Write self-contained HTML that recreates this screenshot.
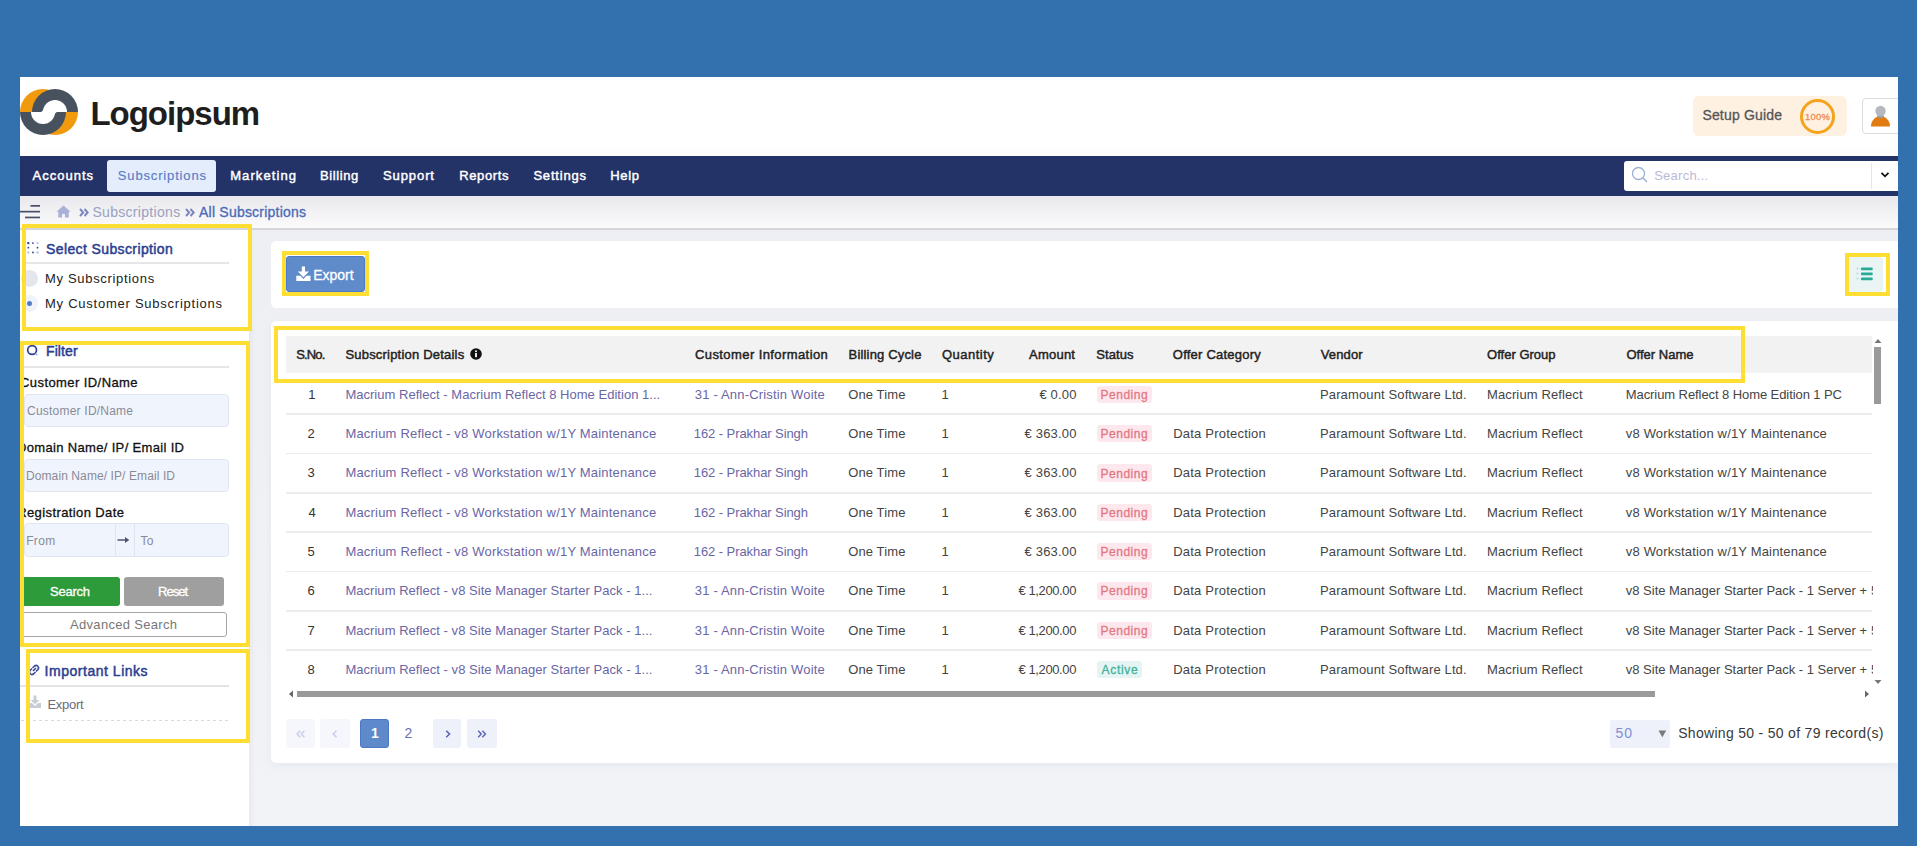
<!DOCTYPE html>
<html><head><meta charset="utf-8"><style>
html,body{margin:0;padding:0;}
body{width:1917px;height:846px;position:relative;overflow:hidden;background:#3270ae;font-family:"Liberation Sans", sans-serif;}
span{font-family:"Liberation Sans", sans-serif;}
</style></head><body>
<div style="position:absolute;left:20px;top:77px;width:1878px;height:749px;background:#fff"></div>
<div style="position:absolute;left:20px;top:147px;width:1878px;height:8px;background:linear-gradient(#fff,#fbfbfb)"></div>
<div style="position:absolute;left:20px;top:155.6px;width:1878px;height:40px;background:#233267"></div>
<div style="position:absolute;left:107px;top:160.3px;width:109px;height:31.5px;background:#e3edfb;border-radius:3px"></div>
<div style="position:absolute;left:20px;top:195.6px;width:1878px;height:32.4px;background:linear-gradient(#e9e9ed,#fbfbfc)"></div>
<div style="position:absolute;left:20px;top:228px;width:1878px;height:1.5px;background:#d6d6da"></div>
<div style="position:absolute;left:20px;top:229.5px;width:229px;height:596.5px;background:#fff"></div>
<div style="position:absolute;left:249px;top:229.5px;width:1649px;height:596.5px;background:linear-gradient(#edeff4,#eff1f5 60%,#f1f3f7)"></div>
<div style="position:absolute;left:249px;top:229.5px;width:6px;height:596.5px;background:linear-gradient(90deg,rgba(0,0,0,0.035),rgba(0,0,0,0))"></div>
<div style="position:absolute;left:271px;top:240.5px;width:1627px;height:67.5px;background:#fff;border-radius:5px 0 0 5px"></div>
<div style="position:absolute;left:271px;top:320.5px;width:1627px;height:442.5px;background:#fff;border-radius:5px 0 0 5px;box-shadow:0 3px 8px rgba(40,50,80,0.05)"></div>
<div style="position:absolute;left:1693px;top:96px;width:154px;height:40px;background:#fef1e2;border-radius:6px"></div>
<div style="position:absolute;left:1800px;top:99px;width:29px;height:29px;border:3px solid #f5a31a;border-radius:50%"></div>
<div style="position:absolute;left:1862px;top:98px;width:40px;height:36px;background:#fff;border:1px solid #dcdcdc;border-radius:4px;box-sizing:border-box"></div>
<svg style="position:absolute;left:1870px;top:104px" width="22" height="24" viewBox="0 0 22 24"><path d="M1 22.6 C1 17.5 4 12.5 10.5 12.5 C17 12.5 20 17.5 20 22.6 Z" fill="#e07c12"/><circle cx="10.5" cy="7" r="5.2" fill="#b5b9be"/><path d="M7 11.2 Q10.5 13.2 14 11.2 L14 13 Q10.5 14.8 7 13 Z" fill="#9aa0a6"/></svg>
<div style="position:absolute;left:1624px;top:161px;width:274px;height:30px;background:#fff;border-radius:3px 0 0 3px"></div>
<div style="position:absolute;left:1871px;top:163px;width:1px;height:26px;background:#e5e5e5"></div>
<svg style="position:absolute;left:1631px;top:166px" width="18" height="17" viewBox="0 0 18 17"><circle cx="7.5" cy="7.5" r="6" fill="none" stroke="#9db0d2" stroke-width="1.3"/><line x1="11.8" y1="11.8" x2="16" y2="16" stroke="#9db0d2" stroke-width="1.5"/></svg>
<svg style="position:absolute;left:1880px;top:171px" width="10" height="8" viewBox="0 0 10 8"><path d="M1.5 1.8 L5 5.3 L8.5 1.8" fill="none" stroke="#111" stroke-width="1.8"/></svg>
<svg style="position:absolute;left:20px;top:204px" width="21" height="15" viewBox="0 0 21 15"><rect x="10.5" y="1" width="9.5" height="1.7" fill="#4b5069"/><rect x="0" y="6.8" width="20" height="1.7" fill="#4b5069"/><rect x="5" y="12.6" width="15" height="1.7" fill="#4b5069"/></svg>
<svg style="position:absolute;left:56px;top:205px" width="15" height="13" viewBox="0 0 15 13"><path d="M7.5 0.5 L0.5 6.8 L2.3 6.8 L2.3 12.5 L6 12.5 L6 9 L9 9 L9 12.5 L12.7 12.5 L12.7 6.8 L14.5 6.8 Z" fill="#a8b1d8"/></svg>
<svg style="position:absolute;left:79px;top:208px" width="10" height="9" viewBox="0 0 10 9"><path d="M1 1 L4.2 4.5 L1 8 M5.5 1 L8.7 4.5 L5.5 8" fill="none" stroke="#7b84bd" stroke-width="1.9"/></svg>
<svg style="position:absolute;left:185px;top:208px" width="10" height="9" viewBox="0 0 10 9"><path d="M1 1 L4.2 4.5 L1 8 M5.5 1 L8.7 4.5 L5.5 8" fill="none" stroke="#7b84bd" stroke-width="1.9"/></svg>
<svg style="position:absolute;left:26px;top:241px" width="14" height="14" viewBox="0 0 14 14"><g fill="#2f3f94"><circle cx="2.3" cy="2.1" r="1.2"/><circle cx="6.9" cy="2.1" r="0.9"/><circle cx="2.3" cy="6.7" r="0.9"/><circle cx="11.5" cy="6.7" r="0.9"/><circle cx="6.9" cy="11.4" r="0.9"/></g><g fill="#b9c3e6"><circle cx="11.5" cy="2.1" r="1.2"/><circle cx="2.3" cy="11.4" r="1.2"/><circle cx="11.5" cy="11.4" r="1.2"/></g></svg>
<div style="position:absolute;left:24px;top:262.2px;width:205px;height:1.5px;background:#e6e6e8"></div>
<div style="position:absolute;left:20.7px;top:270px;width:17px;height:17px;background:#e3e6ec;border-radius:50%"></div>
<div style="position:absolute;left:20.7px;top:295.1px;width:17px;height:17px;background:#f0f3fa;border-radius:50%"></div>
<div style="position:absolute;left:26.6px;top:301px;width:5.2px;height:5.2px;background:#4f7cc6;border-radius:50%"></div>
<svg style="position:absolute;left:26px;top:344px" width="13" height="13" viewBox="0 0 13 13"><circle cx="6.1" cy="6" r="4.4" fill="none" stroke="#2f3f94" stroke-width="1.7"/><line x1="9.4" y1="9.4" x2="11.2" y2="11.2" stroke="#8a96c8" stroke-width="1.2"/></svg>
<div style="position:absolute;left:24px;top:366.2px;width:205px;height:1.5px;background:#e6e6e8"></div>
<div style="position:absolute;left:24px;top:393.5px;width:205px;height:33px;background:#f0f5fd;border:1px solid #e1e7f2;border-radius:4px;box-sizing:border-box"></div>
<div style="position:absolute;left:24px;top:459px;width:205px;height:33px;background:#f0f5fd;border:1px solid #e1e7f2;border-radius:4px;box-sizing:border-box"></div>
<div style="position:absolute;left:23.8px;top:523.3px;width:205px;height:34px;background:#f0f5fd;border:1px solid #e1e7f2;border-radius:4px;box-sizing:border-box"></div>
<div style="position:absolute;left:114.5px;top:524px;width:1px;height:33px;background:#dfe5f0"></div>
<div style="position:absolute;left:134px;top:524px;width:1px;height:33px;background:#dfe5f0"></div>
<svg style="position:absolute;left:117px;top:535px" width="14" height="10" viewBox="0 0 14 10"><path d="M0.5 5 H9" stroke="#50566e" stroke-width="1.5"/><path d="M8 2 L12.3 5 L8 8 Z" fill="#50566e"/></svg>
<div style="position:absolute;left:20.8px;top:577.4px;width:99.2px;height:29px;background:#2e9b3b;border-radius:3px"></div>
<div style="position:absolute;left:124px;top:577.4px;width:100px;height:29px;background:#9f9f9f;border-radius:3px"></div>
<div style="position:absolute;left:20px;top:612px;width:206.5px;height:25px;background:#fff;border:1px solid #a5a5a5;border-radius:3px;box-sizing:border-box"></div>
<svg style="position:absolute;left:27px;top:663px" width="14" height="14" viewBox="0 0 14 14"><g fill="none" stroke="#3a4a9a" stroke-width="1.6"><path d="M6 8 L9 5"/><path d="M5 5.5 L3 7.5 A2.5 2.5 0 0 0 6.5 11 L8.5 9"/><path d="M5.5 5 L7.5 3 A2.5 2.5 0 0 1 11 6.5 L9 8.5"/></g></svg>
<div style="position:absolute;left:20px;top:685px;width:209px;height:1.5px;background:#e4e4e6"></div>
<svg style="position:absolute;left:29px;top:695px" width="12" height="13" viewBox="0 0 12 13"><path d="M4.5 0.5 H7.5 V5 H10.5 L6 9.2 L1.5 5 H4.5 Z" fill="#c9cdd6"/><path d="M0 8 H3 L6 11 L9 8 H12 V13 H0 Z" fill="#c9cdd6"/></svg>
<div style="position:absolute;left:20.8px;top:720px;width:208px;height:1px;background:repeating-linear-gradient(90deg,#d9d9d9 0 3px,transparent 3px 6px)"></div>
<div style="position:absolute;left:286.3px;top:255.5px;width:78.4px;height:36.1px;background:#5f8bcb;border:1px solid #4b7bc6;box-sizing:border-box;border-radius:3px"></div>
<svg style="position:absolute;left:296px;top:266px" width="15" height="16" viewBox="0 0 15 16"><path d="M5.8 0.5 H9 V5.5 H13 L7.4 11.3 L1.8 5.5 H5.8 Z" fill="#fff"/><path d="M0.3 9.8 H4.3 L7.4 12.9 L10.5 9.8 H14.5 V15 H0.3 Z" fill="#fff"/></svg>
<div style="position:absolute;left:1849px;top:257px;width:34px;height:35px;background:#eaf4f5;border-radius:0 4px 4px 0"></div>
<svg style="position:absolute;left:1856px;top:266px" width="20" height="16" viewBox="0 0 20 16"><g fill="#bfe3dc"><circle cx="1.5" cy="2.6" r="1.2"/><circle cx="1.5" cy="7.6" r="1.2"/><circle cx="1.5" cy="12.6" r="1.2"/></g><g fill="#27ab97"><rect x="4.8" y="1.6" width="12" height="2.6" rx="1.3"/><rect x="4.8" y="6.6" width="12" height="2.6" rx="1.3"/><rect x="4.8" y="11.6" width="12" height="2.6" rx="1.3"/></g></svg>
<div style="position:absolute;left:285.8px;top:335.7px;width:1586.4px;height:37.6px;background:#f2f2f2"></div>
<svg style="position:absolute;left:470px;top:348px" width="12" height="12" viewBox="0 0 12 12"><circle cx="6" cy="6" r="5.8" fill="#111"/><rect x="5.1" y="5" width="1.8" height="4.2" fill="#fff"/><circle cx="6" cy="3.3" r="1" fill="#fff"/></svg>
<div style="position:absolute;left:286px;top:413.4px;width:1586px;height:1.5px;background:#ececf0"></div>
<div style="position:absolute;left:1096.6px;top:385.59999999999997px;width:55.4px;height:17.4px;background:#fde8ee;border-radius:3px"></div>
<div style="position:absolute;left:286px;top:452.72999999999996px;width:1586px;height:1.5px;background:#ececf0"></div>
<div style="position:absolute;left:1096.6px;top:424.92999999999995px;width:55.4px;height:17.4px;background:#fde8ee;border-radius:3px"></div>
<div style="position:absolute;left:286px;top:492.05999999999995px;width:1586px;height:1.5px;background:#ececf0"></div>
<div style="position:absolute;left:1096.6px;top:464.25999999999993px;width:55.4px;height:17.4px;background:#fde8ee;border-radius:3px"></div>
<div style="position:absolute;left:286px;top:531.39px;width:1586px;height:1.5px;background:#ececf0"></div>
<div style="position:absolute;left:1096.6px;top:503.59px;width:55.4px;height:17.4px;background:#fde8ee;border-radius:3px"></div>
<div style="position:absolute;left:286px;top:570.72px;width:1586px;height:1.5px;background:#ececf0"></div>
<div style="position:absolute;left:1096.6px;top:542.9200000000001px;width:55.4px;height:17.4px;background:#fde8ee;border-radius:3px"></div>
<div style="position:absolute;left:286px;top:610.05px;width:1586px;height:1.5px;background:#ececf0"></div>
<div style="position:absolute;left:1096.6px;top:582.25px;width:55.4px;height:17.4px;background:#fde8ee;border-radius:3px"></div>
<div style="position:absolute;left:286px;top:649.38px;width:1586px;height:1.5px;background:#ececf0"></div>
<div style="position:absolute;left:1096.6px;top:621.58px;width:55.4px;height:17.4px;background:#fde8ee;border-radius:3px"></div>
<div style="position:absolute;left:1096.6px;top:660.9100000000001px;width:45.6px;height:17.4px;background:#e6f5f3;border-radius:3px"></div>
<div style="position:absolute;left:296.9px;top:690.5px;width:1358.4px;height:6.8px;background:#9a9a9a"></div>
<svg style="position:absolute;left:288px;top:690px" width="6" height="8" viewBox="0 0 6 8"><path d="M5 0.5 L1 4 L5 7.5 Z" fill="#666"/></svg>
<svg style="position:absolute;left:1864px;top:690px" width="6" height="8" viewBox="0 0 6 8"><path d="M1 0.5 L5 4 L1 7.5 Z" fill="#666"/></svg>
<div style="position:absolute;left:1874.3px;top:346.7px;width:6.3px;height:57.6px;background:#9a9a9a"></div>
<svg style="position:absolute;left:1874px;top:338px" width="8" height="6" viewBox="0 0 8 6"><path d="M0.5 5 L4 1 L7.5 5 Z" fill="#777"/></svg>
<svg style="position:absolute;left:1874px;top:679px" width="8" height="6" viewBox="0 0 8 6"><path d="M0.5 1 L4 5 L7.5 1 Z" fill="#777"/></svg>
<div style="position:absolute;left:286px;top:719.1px;width:28.6px;height:28.6px;background:#f6f7fc;border-radius:3px"></div>
<div style="position:absolute;left:319.8px;top:719.1px;width:29.9px;height:28.6px;background:#f6f7fc;border-radius:3px"></div>
<div style="position:absolute;left:360.1px;top:719.1px;width:28.6px;height:28.6px;background:#5e89cb;border:1px solid #4b78c2;box-sizing:border-box;border-radius:3px"></div>
<div style="position:absolute;left:432.9px;top:719.1px;width:28.6px;height:28.6px;background:#eef0fa;border-radius:3px"></div>
<div style="position:absolute;left:466.7px;top:719.1px;width:29.9px;height:28.6px;background:#eef0fa;border-radius:3px"></div>
<svg style="position:absolute;left:296px;top:730px" width="10" height="8" viewBox="0 0 10 8"><path d="M4.2 0.8 L1.2 4 L4.2 7.2 M8.4 0.8 L5.4 4 L8.4 7.2" fill="none" stroke="#c8cde9" stroke-width="1.6"/></svg>
<svg style="position:absolute;left:331px;top:730px" width="8" height="8" viewBox="0 0 8 8"><path d="M5.5 0.8 L2.2 4 L5.5 7.2" fill="none" stroke="#c8cde9" stroke-width="1.6"/></svg>
<svg style="position:absolute;left:443.5px;top:730px" width="8" height="8" viewBox="0 0 8 8"><path d="M2.2 0.8 L5.5 4 L2.2 7.2" fill="none" stroke="#5f66b3" stroke-width="1.6"/></svg>
<svg style="position:absolute;left:477px;top:730px" width="10" height="8" viewBox="0 0 10 8"><path d="M1.2 0.8 L4.2 4 L1.2 7.2 M5.4 0.8 L8.4 4 L5.4 7.2" fill="none" stroke="#5f66b3" stroke-width="1.5"/></svg>
<div style="position:absolute;left:1610.3px;top:719.6px;width:60.2px;height:28.1px;background:#eef0fa;border-radius:3px"></div>
<svg style="position:absolute;left:1657.5px;top:729.5px" width="9" height="8" viewBox="0 0 9 8"><path d="M0.5 0.5 L8.2 0.5 L4.35 7.2 Z" fill="#7a7a7a"/></svg>
<svg style="position:absolute;left:20px;top:88px" width="58" height="48" viewBox="0 0 58 48">
<defs><clipPath id="lgt"><rect x="-1" y="-1" width="60" height="25"/></clipPath><clipPath id="lgb"><rect x="-1" y="24" width="60" height="25"/></clipPath></defs>
<g clip-path="url(#lgt)"><circle cx="23" cy="24" r="23" fill="#f29a0e"/><circle cx="35" cy="24" r="23" fill="#47525e"/><circle cx="35" cy="24" r="12" fill="#fff"/></g>
<g clip-path="url(#lgb)"><circle cx="35" cy="24" r="23" fill="#f29a0e"/><circle cx="23" cy="24" r="23" fill="#47525e"/><circle cx="23" cy="24" r="12" fill="#fff"/></g>
<path d="M18.6 24.2 A4.6 4.6 0 0 0 23.9 19.2 L24.2 24.2 Z" fill="#fff"/>
<path d="M39.4 23.8 A4.6 4.6 0 0 0 34.1 28.8 L33.8 23.8 Z" fill="#fff"/>

</svg>
<span id="t0" style="position:absolute;left:32.60px;top:169.00px;font-size:13px;line-height:13px;font-weight:400;color:#ffffff;letter-spacing:0.988px;white-space:nowrap;;-webkit-text-stroke:0.45px currentColor">Accounts</span>
<span id="t1" style="position:absolute;left:117.80px;top:169.00px;font-size:13px;line-height:13px;font-weight:400;color:#5b7cc9;letter-spacing:0.846px;white-space:nowrap;-webkit-text-stroke:0.15px currentColor">Subscriptions</span>
<span id="t2" style="position:absolute;left:230.20px;top:169.00px;font-size:13px;line-height:13px;font-weight:400;color:#ffffff;letter-spacing:1.090px;white-space:nowrap;;-webkit-text-stroke:0.45px currentColor">Marketing</span>
<span id="t3" style="position:absolute;left:320.00px;top:169.00px;font-size:13px;line-height:13px;font-weight:400;color:#ffffff;letter-spacing:0.585px;white-space:nowrap;;-webkit-text-stroke:0.45px currentColor">Billing</span>
<span id="t4" style="position:absolute;left:383.00px;top:169.00px;font-size:13px;line-height:13px;font-weight:400;color:#ffffff;letter-spacing:0.909px;white-space:nowrap;;-webkit-text-stroke:0.45px currentColor">Support</span>
<span id="t5" style="position:absolute;left:459.20px;top:169.00px;font-size:13px;line-height:13px;font-weight:400;color:#ffffff;letter-spacing:0.645px;white-space:nowrap;;-webkit-text-stroke:0.45px currentColor">Reports</span>
<span id="t6" style="position:absolute;left:533.40px;top:169.00px;font-size:13px;line-height:13px;font-weight:400;color:#ffffff;letter-spacing:0.802px;white-space:nowrap;;-webkit-text-stroke:0.45px currentColor">Settings</span>
<span id="t7" style="position:absolute;left:610.20px;top:169.00px;font-size:13px;line-height:13px;font-weight:400;color:#ffffff;letter-spacing:0.683px;white-space:nowrap;;-webkit-text-stroke:0.45px currentColor">Help</span>
<span id="t8" style="position:absolute;left:90.40px;top:96.87px;font-size:33px;line-height:33px;font-weight:701;color:#1e1e1e;letter-spacing:-1.002px;white-space:nowrap;">Logoipsum</span>
<span id="t9" style="position:absolute;left:1702.40px;top:108.15px;font-size:14px;line-height:14px;font-weight:400;color:#555;letter-spacing:0.176px;white-space:nowrap;-webkit-text-stroke:0.3px currentColor">Setup Guide</span>
<span id="t10" style="position:absolute;left:1805.00px;top:111.96px;font-size:9.5px;line-height:9.5px;font-weight:400;color:#f08d55;letter-spacing:0.229px;white-space:nowrap;;-webkit-text-stroke:0.33px currentColor">100%</span>
<span id="t11" style="position:absolute;left:1654.20px;top:168.60px;font-size:13px;line-height:13px;font-weight:400;color:#b9bbd6;letter-spacing:0.246px;white-space:nowrap;">Search...</span>
<span id="t12" style="position:absolute;left:92.40px;top:205.15px;font-size:14px;line-height:14px;font-weight:400;color:#9aa0bf;letter-spacing:0.313px;white-space:nowrap;">Subscriptions</span>
<span id="t13" style="position:absolute;left:199.00px;top:205.15px;font-size:14px;line-height:14px;font-weight:400;color:#4a69b6;letter-spacing:0.219px;white-space:nowrap;-webkit-text-stroke:0.3px currentColor">All Subscriptions</span>
<span id="t14" style="position:absolute;left:46.00px;top:241.65px;font-size:14px;line-height:14px;font-weight:400;color:#2c3d8f;letter-spacing:0.386px;white-space:nowrap;;-webkit-text-stroke:0.48px currentColor">Select Subscription</span>
<span id="t15" style="position:absolute;left:45.00px;top:272.00px;font-size:13px;line-height:13px;font-weight:400;color:#222;letter-spacing:0.681px;white-space:nowrap;">My Subscriptions</span>
<span id="t16" style="position:absolute;left:45.00px;top:296.50px;font-size:13px;line-height:13px;font-weight:400;color:#222;letter-spacing:0.752px;white-space:nowrap;">My Customer Subscriptions</span>
<span id="t17" style="position:absolute;left:46.00px;top:343.55px;font-size:14px;line-height:14px;font-weight:400;color:#2c3d8f;letter-spacing:0.095px;white-space:nowrap;;-webkit-text-stroke:0.48px currentColor">Filter</span>
<span id="t18" style="position:absolute;left:20.00px;top:376.00px;font-size:13px;line-height:13px;font-weight:400;color:#111;letter-spacing:0.423px;white-space:nowrap;-webkit-text-stroke:0.3px currentColor">Customer ID/Name</span>
<span id="t19" style="position:absolute;left:27.00px;top:404.84px;font-size:12px;line-height:12px;font-weight:400;color:#8a8a96;letter-spacing:0.220px;white-space:nowrap;">Customer ID/Name</span>
<span id="t20" style="position:absolute;left:17.00px;top:441.00px;font-size:13px;line-height:13px;font-weight:400;color:#111;letter-spacing:0.336px;white-space:nowrap;-webkit-text-stroke:0.3px currentColor">Domain Name/ IP/ Email ID</span>
<span id="t21" style="position:absolute;left:26.00px;top:470.34px;font-size:12px;line-height:12px;font-weight:400;color:#8a8a96;letter-spacing:0.095px;white-space:nowrap;">Domain Name/ IP/ Email ID</span>
<span id="t22" style="position:absolute;left:17.20px;top:506.00px;font-size:13px;line-height:13px;font-weight:400;color:#111;letter-spacing:0.397px;white-space:nowrap;-webkit-text-stroke:0.3px currentColor">Registration Date</span>
<span id="t23" style="position:absolute;left:26.20px;top:534.84px;font-size:12px;line-height:12px;font-weight:400;color:#8a8a96;letter-spacing:0.333px;white-space:nowrap;">From</span>
<span id="t24" style="position:absolute;left:140.40px;top:534.84px;font-size:12px;line-height:12px;font-weight:400;color:#8a8a96;letter-spacing:0.312px;white-space:nowrap;">To</span>
<span id="t25" style="position:absolute;left:50.00px;top:585.00px;font-size:13px;line-height:13px;font-weight:400;color:#fff;letter-spacing:-0.241px;white-space:nowrap;-webkit-text-stroke:0.3px currentColor">Search</span>
<span id="t26" style="position:absolute;left:158.00px;top:585.00px;font-size:13px;line-height:13px;font-weight:400;color:#fff;letter-spacing:-0.992px;white-space:nowrap;-webkit-text-stroke:0.3px currentColor">Reset</span>
<span id="t27" style="position:absolute;left:70.00px;top:618.00px;font-size:13px;line-height:13px;font-weight:400;color:#777;letter-spacing:0.312px;white-space:nowrap;">Advanced Search</span>
<span id="t28" style="position:absolute;left:44.60px;top:664.15px;font-size:14px;line-height:14px;font-weight:400;color:#2c3d8f;letter-spacing:0.520px;white-space:nowrap;;-webkit-text-stroke:0.48px currentColor">Important Links</span>
<span id="t29" style="position:absolute;left:47.40px;top:697.50px;font-size:13px;line-height:13px;font-weight:400;color:#6b6b7b;letter-spacing:-0.276px;white-space:nowrap;">Export</span>
<span id="t30" style="position:absolute;left:313.20px;top:268.15px;font-size:14px;line-height:14px;font-weight:400;color:#fff;letter-spacing:-0.014px;white-space:nowrap;-webkit-text-stroke:0.3px currentColor">Export</span>
<span id="t31" style="position:absolute;left:296.20px;top:347.60px;font-size:13px;line-height:13px;font-weight:400;color:#222;letter-spacing:-0.829px;white-space:nowrap;;-webkit-text-stroke:0.45px currentColor">S.No.</span>
<span id="t32" style="position:absolute;left:345.40px;top:347.60px;font-size:13px;line-height:13px;font-weight:400;color:#222;letter-spacing:0.206px;white-space:nowrap;;-webkit-text-stroke:0.45px currentColor">Subscription Details</span>
<span id="t33" style="position:absolute;left:695.00px;top:347.60px;font-size:13px;line-height:13px;font-weight:400;color:#222;letter-spacing:0.411px;white-space:nowrap;;-webkit-text-stroke:0.45px currentColor">Customer Information</span>
<span id="t34" style="position:absolute;left:848.60px;top:347.60px;font-size:13px;line-height:13px;font-weight:400;color:#222;letter-spacing:0.166px;white-space:nowrap;;-webkit-text-stroke:0.45px currentColor">Billing Cycle</span>
<span id="t35" style="position:absolute;left:942.00px;top:347.60px;font-size:13px;line-height:13px;font-weight:400;color:#222;letter-spacing:0.483px;white-space:nowrap;;-webkit-text-stroke:0.45px currentColor">Quantity</span>
<span id="t36" style="position:absolute;left:1029.00px;top:347.60px;font-size:13px;line-height:13px;font-weight:400;color:#222;letter-spacing:0.237px;white-space:nowrap;;-webkit-text-stroke:0.45px currentColor">Amount</span>
<span id="t37" style="position:absolute;left:1096.20px;top:347.60px;font-size:13px;line-height:13px;font-weight:400;color:#222;letter-spacing:0.108px;white-space:nowrap;;-webkit-text-stroke:0.45px currentColor">Status</span>
<span id="t38" style="position:absolute;left:1172.80px;top:347.60px;font-size:13px;line-height:13px;font-weight:400;color:#222;letter-spacing:0.228px;white-space:nowrap;;-webkit-text-stroke:0.45px currentColor">Offer Category</span>
<span id="t39" style="position:absolute;left:1320.80px;top:347.60px;font-size:13px;line-height:13px;font-weight:400;color:#222;letter-spacing:0.119px;white-space:nowrap;;-webkit-text-stroke:0.45px currentColor">Vendor</span>
<span id="t40" style="position:absolute;left:1487.00px;top:347.60px;font-size:13px;line-height:13px;font-weight:400;color:#222;letter-spacing:0.019px;white-space:nowrap;;-webkit-text-stroke:0.45px currentColor">Offer Group</span>
<span id="t41" style="position:absolute;left:1626.40px;top:347.60px;font-size:13px;line-height:13px;font-weight:400;color:#222;letter-spacing:0.027px;white-space:nowrap;;-webkit-text-stroke:0.45px currentColor">Offer Name</span>
<span id="t42" style="position:absolute;left:308.20px;top:387.70px;font-size:13px;line-height:13px;font-weight:400;color:#333;letter-spacing:0.000px;white-space:nowrap;">1</span>
<span id="t43" style="position:absolute;left:345.40px;top:387.70px;font-size:13px;line-height:13px;font-weight:400;color:#6a66a6;letter-spacing:0.024px;white-space:nowrap;">Macrium Reflect - Macrium Reflect 8 Home Edition 1...</span>
<span id="t44" style="position:absolute;left:694.80px;top:387.70px;font-size:13px;line-height:13px;font-weight:400;color:#6a66a6;letter-spacing:0.181px;white-space:nowrap;">31 - Ann-Cristin Woite</span>
<span id="t45" style="position:absolute;left:848.20px;top:387.70px;font-size:13px;line-height:13px;font-weight:400;color:#444;letter-spacing:0.120px;white-space:nowrap;">One Time</span>
<span id="t46" style="position:absolute;left:941.60px;top:387.70px;font-size:13px;line-height:13px;font-weight:400;color:#444;letter-spacing:0.000px;white-space:nowrap;">1</span>
<span id="t47" style="position:absolute;left:1039.40px;top:387.70px;font-size:13px;line-height:13px;font-weight:400;color:#444;letter-spacing:0.169px;white-space:nowrap;">€ 0.00</span>
<span id="t48" style="position:absolute;left:1100.60px;top:388.84px;font-size:12px;line-height:12px;font-weight:400;color:#e47786;letter-spacing:0.492px;white-space:nowrap;-webkit-text-stroke:0.3px currentColor">Pending</span>
<span id="t49" style="position:absolute;left:1320.00px;top:387.70px;font-size:13px;line-height:13px;font-weight:400;color:#444;letter-spacing:0.127px;white-space:nowrap;">Paramount Software Ltd.</span>
<span id="t50" style="position:absolute;left:1487.00px;top:387.70px;font-size:13px;line-height:13px;font-weight:400;color:#444;letter-spacing:0.120px;white-space:nowrap;">Macrium Reflect</span>
<span id="t51" style="position:absolute;left:1625.80px;top:387.70px;font-size:13px;line-height:13px;font-weight:400;color:#444;letter-spacing:-0.080px;white-space:nowrap;">Macrium Reflect 8 Home Edition 1 PC</span>
<span id="t52" style="position:absolute;left:307.40px;top:427.03px;font-size:13px;line-height:13px;font-weight:400;color:#333;letter-spacing:0.000px;white-space:nowrap;">2</span>
<span id="t53" style="position:absolute;left:345.40px;top:427.03px;font-size:13px;line-height:13px;font-weight:400;color:#6a66a6;letter-spacing:0.193px;white-space:nowrap;">Macrium Reflect - v8 Workstation w/1Y Maintenance</span>
<span id="t54" style="position:absolute;left:693.80px;top:427.03px;font-size:13px;line-height:13px;font-weight:400;color:#6a66a6;letter-spacing:-0.079px;white-space:nowrap;">162 - Prakhar Singh</span>
<span id="t55" style="position:absolute;left:848.20px;top:427.03px;font-size:13px;line-height:13px;font-weight:400;color:#444;letter-spacing:0.120px;white-space:nowrap;">One Time</span>
<span id="t56" style="position:absolute;left:941.60px;top:427.03px;font-size:13px;line-height:13px;font-weight:400;color:#444;letter-spacing:0.000px;white-space:nowrap;">1</span>
<span id="t57" style="position:absolute;left:1024.60px;top:427.03px;font-size:13px;line-height:13px;font-weight:400;color:#444;letter-spacing:0.170px;white-space:nowrap;">€ 363.00</span>
<span id="t58" style="position:absolute;left:1100.60px;top:428.17px;font-size:12px;line-height:12px;font-weight:400;color:#e47786;letter-spacing:0.492px;white-space:nowrap;-webkit-text-stroke:0.3px currentColor">Pending</span>
<span id="t59" style="position:absolute;left:1173.20px;top:427.03px;font-size:13px;line-height:13px;font-weight:400;color:#444;letter-spacing:0.214px;white-space:nowrap;">Data Protection</span>
<span id="t60" style="position:absolute;left:1320.00px;top:427.03px;font-size:13px;line-height:13px;font-weight:400;color:#444;letter-spacing:0.127px;white-space:nowrap;">Paramount Software Ltd.</span>
<span id="t61" style="position:absolute;left:1487.00px;top:427.03px;font-size:13px;line-height:13px;font-weight:400;color:#444;letter-spacing:0.120px;white-space:nowrap;">Macrium Reflect</span>
<span id="t62" style="position:absolute;left:1625.80px;top:427.03px;font-size:13px;line-height:13px;font-weight:400;color:#444;letter-spacing:0.164px;white-space:nowrap;">v8 Workstation w/1Y Maintenance</span>
<span id="t63" style="position:absolute;left:307.40px;top:466.36px;font-size:13px;line-height:13px;font-weight:400;color:#333;letter-spacing:0.000px;white-space:nowrap;">3</span>
<span id="t64" style="position:absolute;left:345.40px;top:466.36px;font-size:13px;line-height:13px;font-weight:400;color:#6a66a6;letter-spacing:0.193px;white-space:nowrap;">Macrium Reflect - v8 Workstation w/1Y Maintenance</span>
<span id="t65" style="position:absolute;left:693.80px;top:466.36px;font-size:13px;line-height:13px;font-weight:400;color:#6a66a6;letter-spacing:-0.079px;white-space:nowrap;">162 - Prakhar Singh</span>
<span id="t66" style="position:absolute;left:848.20px;top:466.36px;font-size:13px;line-height:13px;font-weight:400;color:#444;letter-spacing:0.120px;white-space:nowrap;">One Time</span>
<span id="t67" style="position:absolute;left:941.60px;top:466.36px;font-size:13px;line-height:13px;font-weight:400;color:#444;letter-spacing:0.000px;white-space:nowrap;">1</span>
<span id="t68" style="position:absolute;left:1024.60px;top:466.36px;font-size:13px;line-height:13px;font-weight:400;color:#444;letter-spacing:0.170px;white-space:nowrap;">€ 363.00</span>
<span id="t69" style="position:absolute;left:1100.60px;top:467.50px;font-size:12px;line-height:12px;font-weight:400;color:#e47786;letter-spacing:0.492px;white-space:nowrap;-webkit-text-stroke:0.3px currentColor">Pending</span>
<span id="t70" style="position:absolute;left:1173.20px;top:466.36px;font-size:13px;line-height:13px;font-weight:400;color:#444;letter-spacing:0.214px;white-space:nowrap;">Data Protection</span>
<span id="t71" style="position:absolute;left:1320.00px;top:466.36px;font-size:13px;line-height:13px;font-weight:400;color:#444;letter-spacing:0.127px;white-space:nowrap;">Paramount Software Ltd.</span>
<span id="t72" style="position:absolute;left:1487.00px;top:466.36px;font-size:13px;line-height:13px;font-weight:400;color:#444;letter-spacing:0.120px;white-space:nowrap;">Macrium Reflect</span>
<span id="t73" style="position:absolute;left:1625.80px;top:466.36px;font-size:13px;line-height:13px;font-weight:400;color:#444;letter-spacing:0.164px;white-space:nowrap;">v8 Workstation w/1Y Maintenance</span>
<span id="t74" style="position:absolute;left:308.40px;top:505.69px;font-size:13px;line-height:13px;font-weight:400;color:#333;letter-spacing:0.000px;white-space:nowrap;">4</span>
<span id="t75" style="position:absolute;left:345.40px;top:505.69px;font-size:13px;line-height:13px;font-weight:400;color:#6a66a6;letter-spacing:0.193px;white-space:nowrap;">Macrium Reflect - v8 Workstation w/1Y Maintenance</span>
<span id="t76" style="position:absolute;left:693.80px;top:505.69px;font-size:13px;line-height:13px;font-weight:400;color:#6a66a6;letter-spacing:-0.079px;white-space:nowrap;">162 - Prakhar Singh</span>
<span id="t77" style="position:absolute;left:848.20px;top:505.69px;font-size:13px;line-height:13px;font-weight:400;color:#444;letter-spacing:0.120px;white-space:nowrap;">One Time</span>
<span id="t78" style="position:absolute;left:941.60px;top:505.69px;font-size:13px;line-height:13px;font-weight:400;color:#444;letter-spacing:0.000px;white-space:nowrap;">1</span>
<span id="t79" style="position:absolute;left:1024.60px;top:505.69px;font-size:13px;line-height:13px;font-weight:400;color:#444;letter-spacing:0.170px;white-space:nowrap;">€ 363.00</span>
<span id="t80" style="position:absolute;left:1100.60px;top:506.83px;font-size:12px;line-height:12px;font-weight:400;color:#e47786;letter-spacing:0.492px;white-space:nowrap;-webkit-text-stroke:0.3px currentColor">Pending</span>
<span id="t81" style="position:absolute;left:1173.20px;top:505.69px;font-size:13px;line-height:13px;font-weight:400;color:#444;letter-spacing:0.214px;white-space:nowrap;">Data Protection</span>
<span id="t82" style="position:absolute;left:1320.00px;top:505.69px;font-size:13px;line-height:13px;font-weight:400;color:#444;letter-spacing:0.127px;white-space:nowrap;">Paramount Software Ltd.</span>
<span id="t83" style="position:absolute;left:1487.00px;top:505.69px;font-size:13px;line-height:13px;font-weight:400;color:#444;letter-spacing:0.120px;white-space:nowrap;">Macrium Reflect</span>
<span id="t84" style="position:absolute;left:1625.80px;top:505.69px;font-size:13px;line-height:13px;font-weight:400;color:#444;letter-spacing:0.164px;white-space:nowrap;">v8 Workstation w/1Y Maintenance</span>
<span id="t85" style="position:absolute;left:307.40px;top:545.02px;font-size:13px;line-height:13px;font-weight:400;color:#333;letter-spacing:0.000px;white-space:nowrap;">5</span>
<span id="t86" style="position:absolute;left:345.40px;top:545.02px;font-size:13px;line-height:13px;font-weight:400;color:#6a66a6;letter-spacing:0.193px;white-space:nowrap;">Macrium Reflect - v8 Workstation w/1Y Maintenance</span>
<span id="t87" style="position:absolute;left:693.80px;top:545.02px;font-size:13px;line-height:13px;font-weight:400;color:#6a66a6;letter-spacing:-0.079px;white-space:nowrap;">162 - Prakhar Singh</span>
<span id="t88" style="position:absolute;left:848.20px;top:545.02px;font-size:13px;line-height:13px;font-weight:400;color:#444;letter-spacing:0.120px;white-space:nowrap;">One Time</span>
<span id="t89" style="position:absolute;left:941.60px;top:545.02px;font-size:13px;line-height:13px;font-weight:400;color:#444;letter-spacing:0.000px;white-space:nowrap;">1</span>
<span id="t90" style="position:absolute;left:1024.60px;top:545.02px;font-size:13px;line-height:13px;font-weight:400;color:#444;letter-spacing:0.170px;white-space:nowrap;">€ 363.00</span>
<span id="t91" style="position:absolute;left:1100.60px;top:546.16px;font-size:12px;line-height:12px;font-weight:400;color:#e47786;letter-spacing:0.492px;white-space:nowrap;-webkit-text-stroke:0.3px currentColor">Pending</span>
<span id="t92" style="position:absolute;left:1173.20px;top:545.02px;font-size:13px;line-height:13px;font-weight:400;color:#444;letter-spacing:0.214px;white-space:nowrap;">Data Protection</span>
<span id="t93" style="position:absolute;left:1320.00px;top:545.02px;font-size:13px;line-height:13px;font-weight:400;color:#444;letter-spacing:0.127px;white-space:nowrap;">Paramount Software Ltd.</span>
<span id="t94" style="position:absolute;left:1487.00px;top:545.02px;font-size:13px;line-height:13px;font-weight:400;color:#444;letter-spacing:0.120px;white-space:nowrap;">Macrium Reflect</span>
<span id="t95" style="position:absolute;left:1625.80px;top:545.02px;font-size:13px;line-height:13px;font-weight:400;color:#444;letter-spacing:0.164px;white-space:nowrap;">v8 Workstation w/1Y Maintenance</span>
<span id="t96" style="position:absolute;left:307.40px;top:584.35px;font-size:13px;line-height:13px;font-weight:400;color:#333;letter-spacing:0.000px;white-space:nowrap;">6</span>
<span id="t97" style="position:absolute;left:345.40px;top:584.35px;font-size:13px;line-height:13px;font-weight:400;color:#6a66a6;letter-spacing:0.041px;white-space:nowrap;">Macrium Reflect - v8 Site Manager Starter Pack - 1...</span>
<span id="t98" style="position:absolute;left:694.80px;top:584.35px;font-size:13px;line-height:13px;font-weight:400;color:#6a66a6;letter-spacing:0.181px;white-space:nowrap;">31 - Ann-Cristin Woite</span>
<span id="t99" style="position:absolute;left:848.20px;top:584.35px;font-size:13px;line-height:13px;font-weight:400;color:#444;letter-spacing:0.120px;white-space:nowrap;">One Time</span>
<span id="t100" style="position:absolute;left:941.60px;top:584.35px;font-size:13px;line-height:13px;font-weight:400;color:#444;letter-spacing:0.000px;white-space:nowrap;">1</span>
<span id="t101" style="position:absolute;left:1018.40px;top:584.35px;font-size:13px;line-height:13px;font-weight:400;color:#444;letter-spacing:-0.384px;white-space:nowrap;">€ 1,200.00</span>
<span id="t102" style="position:absolute;left:1100.60px;top:585.49px;font-size:12px;line-height:12px;font-weight:400;color:#e47786;letter-spacing:0.492px;white-space:nowrap;-webkit-text-stroke:0.3px currentColor">Pending</span>
<span id="t103" style="position:absolute;left:1173.20px;top:584.35px;font-size:13px;line-height:13px;font-weight:400;color:#444;letter-spacing:0.214px;white-space:nowrap;">Data Protection</span>
<span id="t104" style="position:absolute;left:1320.00px;top:584.35px;font-size:13px;line-height:13px;font-weight:400;color:#444;letter-spacing:0.127px;white-space:nowrap;">Paramount Software Ltd.</span>
<span id="t105" style="position:absolute;left:1487.00px;top:584.35px;font-size:13px;line-height:13px;font-weight:400;color:#444;letter-spacing:0.120px;white-space:nowrap;">Macrium Reflect</span>
<span id="t106" style="position:absolute;left:1625.80px;top:584.35px;font-size:13px;line-height:13px;font-weight:400;color:#444;letter-spacing:-0.012px;white-space:nowrap;">v8 Site Manager Starter Pack - 1 Server +</span>
<span id="t107" style="position:absolute;left:307.40px;top:623.68px;font-size:13px;line-height:13px;font-weight:400;color:#333;letter-spacing:0.000px;white-space:nowrap;">7</span>
<span id="t108" style="position:absolute;left:345.40px;top:623.68px;font-size:13px;line-height:13px;font-weight:400;color:#6a66a6;letter-spacing:0.041px;white-space:nowrap;">Macrium Reflect - v8 Site Manager Starter Pack - 1...</span>
<span id="t109" style="position:absolute;left:694.80px;top:623.68px;font-size:13px;line-height:13px;font-weight:400;color:#6a66a6;letter-spacing:0.181px;white-space:nowrap;">31 - Ann-Cristin Woite</span>
<span id="t110" style="position:absolute;left:848.20px;top:623.68px;font-size:13px;line-height:13px;font-weight:400;color:#444;letter-spacing:0.120px;white-space:nowrap;">One Time</span>
<span id="t111" style="position:absolute;left:941.60px;top:623.68px;font-size:13px;line-height:13px;font-weight:400;color:#444;letter-spacing:0.000px;white-space:nowrap;">1</span>
<span id="t112" style="position:absolute;left:1018.40px;top:623.68px;font-size:13px;line-height:13px;font-weight:400;color:#444;letter-spacing:-0.384px;white-space:nowrap;">€ 1,200.00</span>
<span id="t113" style="position:absolute;left:1100.60px;top:624.82px;font-size:12px;line-height:12px;font-weight:400;color:#e47786;letter-spacing:0.492px;white-space:nowrap;-webkit-text-stroke:0.3px currentColor">Pending</span>
<span id="t114" style="position:absolute;left:1173.20px;top:623.68px;font-size:13px;line-height:13px;font-weight:400;color:#444;letter-spacing:0.214px;white-space:nowrap;">Data Protection</span>
<span id="t115" style="position:absolute;left:1320.00px;top:623.68px;font-size:13px;line-height:13px;font-weight:400;color:#444;letter-spacing:0.127px;white-space:nowrap;">Paramount Software Ltd.</span>
<span id="t116" style="position:absolute;left:1487.00px;top:623.68px;font-size:13px;line-height:13px;font-weight:400;color:#444;letter-spacing:0.120px;white-space:nowrap;">Macrium Reflect</span>
<span id="t117" style="position:absolute;left:1625.80px;top:623.68px;font-size:13px;line-height:13px;font-weight:400;color:#444;letter-spacing:-0.012px;white-space:nowrap;">v8 Site Manager Starter Pack - 1 Server +</span>
<span id="t118" style="position:absolute;left:307.40px;top:663.01px;font-size:13px;line-height:13px;font-weight:400;color:#333;letter-spacing:0.000px;white-space:nowrap;">8</span>
<span id="t119" style="position:absolute;left:345.40px;top:663.01px;font-size:13px;line-height:13px;font-weight:400;color:#6a66a6;letter-spacing:0.041px;white-space:nowrap;">Macrium Reflect - v8 Site Manager Starter Pack - 1...</span>
<span id="t120" style="position:absolute;left:694.80px;top:663.01px;font-size:13px;line-height:13px;font-weight:400;color:#6a66a6;letter-spacing:0.181px;white-space:nowrap;">31 - Ann-Cristin Woite</span>
<span id="t121" style="position:absolute;left:848.20px;top:663.01px;font-size:13px;line-height:13px;font-weight:400;color:#444;letter-spacing:0.120px;white-space:nowrap;">One Time</span>
<span id="t122" style="position:absolute;left:941.60px;top:663.01px;font-size:13px;line-height:13px;font-weight:400;color:#444;letter-spacing:0.000px;white-space:nowrap;">1</span>
<span id="t123" style="position:absolute;left:1018.40px;top:663.01px;font-size:13px;line-height:13px;font-weight:400;color:#444;letter-spacing:-0.384px;white-space:nowrap;">€ 1,200.00</span>
<span id="t124" style="position:absolute;left:1101.60px;top:664.15px;font-size:12px;line-height:12px;font-weight:400;color:#3eb29a;letter-spacing:0.662px;white-space:nowrap;-webkit-text-stroke:0.3px currentColor">Active</span>
<span id="t125" style="position:absolute;left:1173.20px;top:663.01px;font-size:13px;line-height:13px;font-weight:400;color:#444;letter-spacing:0.214px;white-space:nowrap;">Data Protection</span>
<span id="t126" style="position:absolute;left:1320.00px;top:663.01px;font-size:13px;line-height:13px;font-weight:400;color:#444;letter-spacing:0.127px;white-space:nowrap;">Paramount Software Ltd.</span>
<span id="t127" style="position:absolute;left:1487.00px;top:663.01px;font-size:13px;line-height:13px;font-weight:400;color:#444;letter-spacing:0.120px;white-space:nowrap;">Macrium Reflect</span>
<span id="t128" style="position:absolute;left:1625.80px;top:663.01px;font-size:13px;line-height:13px;font-weight:400;color:#444;letter-spacing:-0.012px;white-space:nowrap;">v8 Site Manager Starter Pack - 1 Server +</span>
<span id="t129" style="position:absolute;left:371.00px;top:726.15px;font-size:14px;line-height:14px;font-weight:400;color:#fff;letter-spacing:0.000px;white-space:nowrap;font-weight:700">1</span>
<span id="t130" style="position:absolute;left:404.40px;top:726.35px;font-size:14px;line-height:14px;font-weight:400;color:#6a70b5;letter-spacing:0.000px;white-space:nowrap;">2</span>
<span id="t131" style="position:absolute;left:1615.60px;top:726.35px;font-size:14px;line-height:14px;font-weight:400;color:#7d90d4;letter-spacing:0.822px;white-space:nowrap;">50</span>
<span id="t132" style="position:absolute;left:1678.20px;top:726.15px;font-size:14px;line-height:14px;font-weight:400;color:#383838;letter-spacing:0.303px;white-space:nowrap;">Showing 50 - 50 of 79 record(s)</span>
<div class="ov" style="position:absolute;left:0;top:0;width:20px;height:846px;background:#3270ae"></div>
<div class="ov" style="position:absolute;left:1898px;top:0;width:19px;height:846px;background:#3270ae"></div>
<div class="ov" style="position:absolute;left:22px;top:224px;width:230px;height:107px;border:4px solid #ffde34;box-sizing:border-box"></div>
<div class="ov" style="position:absolute;left:20px;top:341px;width:230px;height:306px;border:4px solid #ffde34;box-sizing:border-box"></div>
<div class="ov" style="position:absolute;left:26px;top:649px;width:224px;height:94px;border:4px solid #ffde34;box-sizing:border-box"></div>
<div class="ov" style="position:absolute;left:282px;top:251.3px;width:87px;height:44.69999999999999px;border:4px solid #ffde34;box-sizing:border-box"></div>
<div class="ov" style="position:absolute;left:1845px;top:253.2px;width:45px;height:42.80000000000001px;border:4px solid #ffde34;box-sizing:border-box"></div>
<div class="ov" style="position:absolute;left:274px;top:326.3px;width:1471px;height:56.89999999999998px;border:4px solid #ffde34;box-sizing:border-box"></div>
<div style="position:absolute;left:1871px;top:584.3px;width:1.8px;height:13px;overflow:hidden"><span style="font-size:13px;line-height:13px;position:absolute;top:0;left:0;color:#444">5</span></div>
<div style="position:absolute;left:1871px;top:623.7px;width:1.8px;height:13px;overflow:hidden"><span style="font-size:13px;line-height:13px;position:absolute;top:0;left:0;color:#444">5</span></div>
<div style="position:absolute;left:1871px;top:663.0px;width:1.8px;height:13px;overflow:hidden"><span style="font-size:13px;line-height:13px;position:absolute;top:0;left:0;color:#444">5</span></div>
</body></html>
